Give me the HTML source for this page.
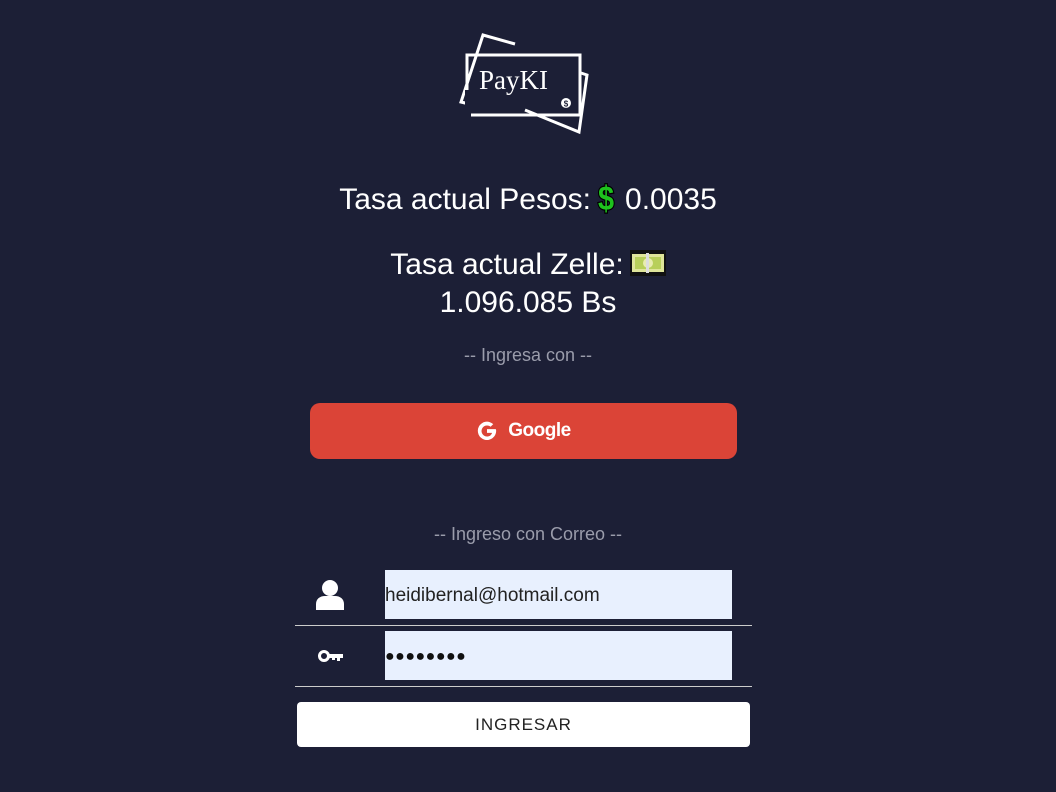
<!DOCTYPE html>
<html><head><meta charset="utf-8"><style>
body{margin:0;background:#1c1f36;width:1056px;height:792px;overflow:hidden;font-family:"Liberation Sans",sans-serif;color:#fff;position:relative}
.a{position:absolute}
.t{position:absolute;left:0;width:1056px;text-align:center;font-size:30px;letter-spacing:0px}
.g{position:absolute;left:0;width:1056px;text-align:center;font-size:18px;color:#9a9cab}
</style></head><body>
<svg class="a" style="left:455px;top:30px" width="140" height="108" viewBox="0 0 140 108">
<g fill="none" stroke="#fff" stroke-width="3">
<polyline points="60,14 28,5 6,72 14,74"/>
<polyline points="70,80 124,102 132,45 126,43"/>
<rect x="12" y="25" width="113" height="60"/>
</g>
<rect x="10" y="60" width="6" height="30" fill="#1c1f36"/>
<text x="24" y="59" font-family="Liberation Serif,serif" font-size="27" fill="#fff">PayKI</text>
<circle cx="111" cy="73" r="5" fill="#fff"/><text x="111" y="76.5" font-size="8" text-anchor="middle" fill="#1c1f36" font-weight="bold">$</text>
</svg>
<div class="t" style="top:181px">Tasa actual Pesos:<svg width="22" height="34" viewBox="0 0 22 34" style="vertical-align:-6px;margin:0 8px 0 4px"><text x="11" y="29" text-anchor="middle" font-size="34" font-weight="bold" fill="#1ec21e" stroke="#000" stroke-width="2.5" paint-order="stroke" transform="scale(0.85,1) translate(2,0)">$</text></svg>0.0035</div>
<div class="t" style="top:246px;line-height:38px">Tasa actual Zelle:<svg width="36" height="26" viewBox="0 0 36 26" style="vertical-align:-2px;margin-left:6px"><rect x="0" y="0" width="36" height="26" fill="#111"/><rect x="2" y="4" width="32" height="18" fill="#dfe59a"/><rect x="5" y="7" width="26" height="12" fill="#b8cf5a"/><circle cx="18" cy="13" r="5" fill="#e8ecb0"/><rect x="16" y="3" width="3" height="20" fill="#ddd"/></svg><br>1.096.085 Bs</div>
<div class="g" style="top:345px">-- Ingresa con --</div>
<div class="a" style="left:310px;top:403px;width:427px;height:56px;background:#db4437;border-radius:10px;display:flex;align-items:center;justify-content:center;font-size:19px;font-weight:bold;letter-spacing:-0.5px">
<svg width="22" height="22" viewBox="0 0 24 24" style="margin-right:10px"><path d="M21.5 10H12v4h5.5c-.7 2.5-2.8 4-5.5 4a6 6 0 1 1 3.9-10.6l2.9-2.9A10 10 0 1 0 22 12c0-.7-.1-1.4-.5-2z" fill="#fff"/></svg>Google</div>
<div class="g" style="top:524px">-- Ingreso con Correo --</div>
<svg class="a" style="left:315px;top:578px" width="30" height="32" viewBox="0 0 30 32"><circle cx="15" cy="10" r="8" fill="#fff"/><path d="M1 32v-6c0-5 4-8 9-8h10c5 0 9 3 9 8v6z" fill="#fff"/></svg>
<div class="a" style="left:385px;top:570px;width:347px;height:49px;background:#e8f0fe;color:#222;font-size:19px;line-height:52px">heidibernal@hotmail.com</div>
<div class="a" style="left:295px;top:625px;width:457px;height:1px;background:#ccc"></div>
<svg class="a" style="left:318px;top:649px" width="26" height="14" viewBox="0 0 26 14"><circle cx="6" cy="7" r="4.5" fill="none" stroke="#fff" stroke-width="3"/><path d="M10 5h15v4h-3v3h-3V9h-2v2h-3V9h-4z" fill="#fff"/></svg>
<div class="a" style="left:385px;top:631px;width:347px;height:49px;background:#e8f0fe;color:#111;font-size:16px;line-height:52px;letter-spacing:0.5px">●●●●●●●●</div>
<div class="a" style="left:295px;top:686px;width:457px;height:1px;background:#ccc"></div>
<div class="a" style="left:297px;top:702px;width:453px;height:45px;background:#fff;border-radius:4px;color:#222;font-size:17px;line-height:45px;text-align:center;letter-spacing:1px">INGRESAR</div>
</body></html>
